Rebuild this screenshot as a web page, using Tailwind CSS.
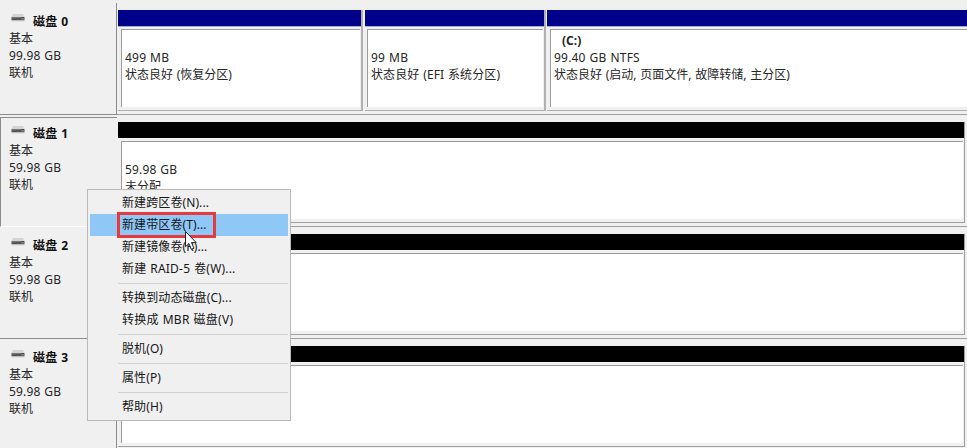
<!DOCTYPE html>
<html lang="zh-CN">
<head>
<meta charset="utf-8">
<title>磁盘管理</title>
<script src="https://cdn.jsdelivr.net/npm/@tailwindcss/browser@4"></script>
</head>
<body class="relative h-[448px] w-[967px] overflow-hidden bg-[#f0f0f0] pt-[3px] font-['Noto_Sans','Noto_Sans_CJK_SC',sans-serif] text-[12px] leading-[17px] text-[#262626] [word-spacing:0.6px]">
<svg class="hidden">
  <symbol id="disk" viewBox="0 0 14 8">
    <path d="M2 0h10l1.5 3H.5z" fill="#d4d4d4"/>
    <rect x="0.5" y="3" width="13" height="3.4" fill="#555"/>
    <path d="M1 3.6h9" stroke="#858585" stroke-width=".8"/>
    <rect x="10.5" y="4.2" width="2" height="1.2" fill="#8b9b8b"/>
    <path d="M1 7.2h12" stroke="#dcdcdc" stroke-width=".8"/>
  </symbol>
</svg>
<main class="flex flex-col">
  <section class="flex h-[112px]">
    <div class="h-[112px] w-[117px] shrink-0 border-r border-b border-[#8c8c8c] pt-[10px] pl-[9px]">
      <div class="flex font-bold text-[#111]"><svg class="mt-[1px] mr-[8px] ml-[2px] h-[8px] w-[14px]"><use href="#disk"/></svg><span class="tracking-[0.2px]">磁盘 0</span></div>
      <div>基本</div><div class="tracking-[0.15px]">99.98 GB</div><div>联机</div>
    </div>
    <div class="flex h-[112px] grow border-b border-[#a0a0a0] pt-[7px] pl-px">
      <div class="mr-[2px] h-[101px] w-[245px] shrink-0 border-r-2 border-b border-[#b0b0b0]">
        <div class="h-[16px] bg-[#00008b]"></div><div class="h-px bg-[#a4acd0]"></div>
        <div class="mt-[2px] ml-[3px] mr-px h-[78px] border-t border-l border-[#9c9c9c] bg-white pt-[19px] pl-[3px]"><div class="tracking-[0.2px]">499 MB</div><div>状态良好 (恢复分区)</div></div>
      </div>
      <div class="mr-[1px] h-[101px] w-[181px] shrink-0 border-r-2 border-b border-[#b0b0b0]">
        <div class="h-[16px] bg-[#00008b]"></div><div class="h-px bg-[#a4acd0]"></div>
        <div class="mt-[2px] ml-[2px] mr-px h-[78px] border-t border-l border-[#9c9c9c] bg-white pt-[19px] pl-[3px]"><div class="tracking-[0.2px]">99 MB</div><div class="tracking-[0.1px]">状态良好 (EFI 系统分区)</div></div>
      </div>
      <div class="h-[101px] grow border-b border-[#b0b0b0]">
        <div class="h-[16px] bg-[#00008b]"></div><div class="h-px bg-[#a4acd0]"></div>
        <div class="mt-[2px] ml-[3px] h-[78px] border-t border-l border-[#9c9c9c] bg-white pt-[2px] pl-[3px]"><div class="pl-[8px] font-bold">(C:)</div><div class="tracking-[0.2px]">99.40 GB NTFS</div><div>状态良好 (启动, 页面文件, 故障转储, 主分区)</div></div>
      </div>
    </div>
  </section>
  <section class="flex h-[112px]">
    <div class="h-[112px] w-[117px] shrink-0 pt-[2px]">
      <div class="h-[110px] border-t border-b border-l border-t-[#8c8c8c] border-b-white border-l-[#8c8c8c] pt-[7px] pl-[8px]">
        <div class="flex font-bold text-[#111]"><svg class="mt-[1px] mr-[8px] ml-[2px] h-[8px] w-[14px]"><use href="#disk"/></svg><span class="tracking-[0.2px]">磁盘 1</span></div>
        <div>基本</div><div class="tracking-[0.15px]">59.98 GB</div><div>联机</div>
      </div>
    </div>
    <div class="h-[112px] grow border-b border-[#a0a0a0] pt-[7px] pl-px">
      <div class="h-[101px] w-[847px] border-r border-b border-[#a0a0a0]">
        <div class="h-[16px] bg-black"></div>
        <div class="mt-[3px] ml-[3px] mr-px h-[78px] border-t border-l border-[#9c9c9c] bg-white pt-[19px] pl-[3px]"><div class="tracking-[0.15px]">59.98 GB</div><div>未分配</div></div>
      </div>
    </div>
  </section>
  <section class="flex h-[112px]">
    <div class="h-[112px] w-[117px] shrink-0 border-r border-b border-[#8c8c8c] pt-[10px] pl-[9px]">
      <div class="flex font-bold text-[#111]"><svg class="mt-[1px] mr-[8px] ml-[2px] h-[8px] w-[14px]"><use href="#disk"/></svg><span class="tracking-[0.2px]">磁盘 2</span></div>
      <div>基本</div><div class="tracking-[0.15px]">59.98 GB</div><div>联机</div>
    </div>
    <div class="h-[112px] grow border-b border-[#a0a0a0] pt-[7px] pl-px">
      <div class="h-[101px] w-[847px] border-r border-b border-[#a0a0a0]">
        <div class="h-[16px] bg-black"></div>
        <div class="mt-[3px] ml-[3px] mr-px h-[78px] border-t border-l border-[#9c9c9c] bg-white"></div>
      </div>
    </div>
  </section>
  <section class="flex h-[112px]">
    <div class="h-[112px] w-[117px] shrink-0 border-r border-b border-[#8c8c8c] pt-[10px] pl-[9px]">
      <div class="flex font-bold text-[#111]"><svg class="mt-[1px] mr-[8px] ml-[2px] h-[8px] w-[14px]"><use href="#disk"/></svg><span class="tracking-[0.2px]">磁盘 3</span></div>
      <div>基本</div><div class="tracking-[0.15px]">59.98 GB</div><div>联机</div>
    </div>
    <div class="h-[112px] grow border-b border-[#a0a0a0] pt-[7px] pl-px">
      <div class="h-[101px] w-[847px] border-r border-b border-[#a0a0a0]">
        <div class="h-[16px] bg-black"></div>
        <div class="mt-[3px] ml-[3px] mr-px h-[78px] border-t border-l border-[#9c9c9c] bg-white"></div>
      </div>
    </div>
  </section>
</main>
<nav class="absolute top-[189px] left-[87px] h-[232px] w-[204px] border border-[#b8b8b8] bg-[#f0f0f0] p-[2px] leading-[22px] text-[#161616]">
  <div class="h-[22px] pl-[32px] tracking-[0.1px]">新建跨区卷(N)...</div>
  <div class="h-[22px] bg-[#8fc7f7] pl-[32px] tracking-[0.1px]">新建带区卷(T)...</div>
  <div class="h-[22px] pl-[32px] tracking-[0.1px]">新建镜像卷(R)...</div>
  <div class="h-[22px] pl-[32px] tracking-[0.2px]">新建 RAID-5 卷(W)...</div>
  <div class="mt-[3px] mb-[3px] ml-[28px] h-px bg-[#d0d0d0]"></div>
  <div class="h-[22px] pl-[32px] tracking-[0.1px]">转换到动态磁盘(C)...</div>
  <div class="h-[22px] pl-[32px] tracking-[0.25px]">转换成 MBR 磁盘(V)</div>
  <div class="mt-[3px] mb-[3px] ml-[28px] h-px bg-[#d0d0d0]"></div>
  <div class="h-[22px] pl-[32px] tracking-[0.1px]">脱机(O)</div>
  <div class="mt-[3px] mb-[3px] ml-[28px] h-px bg-[#d0d0d0]"></div>
  <div class="h-[22px] pl-[32px] tracking-[0.1px]">属性(P)</div>
  <div class="mt-[3px] mb-[3px] ml-[28px] h-px bg-[#d0d0d0]"></div>
  <div class="h-[22px] pl-[32px] tracking-[0.1px]">帮助(H)</div>
</nav>
<div class="absolute top-[212px] left-[117px] h-[26px] w-[99px] border-3 border-[#e63a3c]"></div>
<svg class="absolute top-[230px] left-[184px] h-[21px] w-[14px]" viewBox="0 0 14 21"><path d="M1.5 1.5v15.2l3.4-3.2 2.5 5.8 2.6-1.1-2.5-5.6h4.7z" fill="#fff" stroke="#222" stroke-width="1"/></svg>
</body>
</html>
